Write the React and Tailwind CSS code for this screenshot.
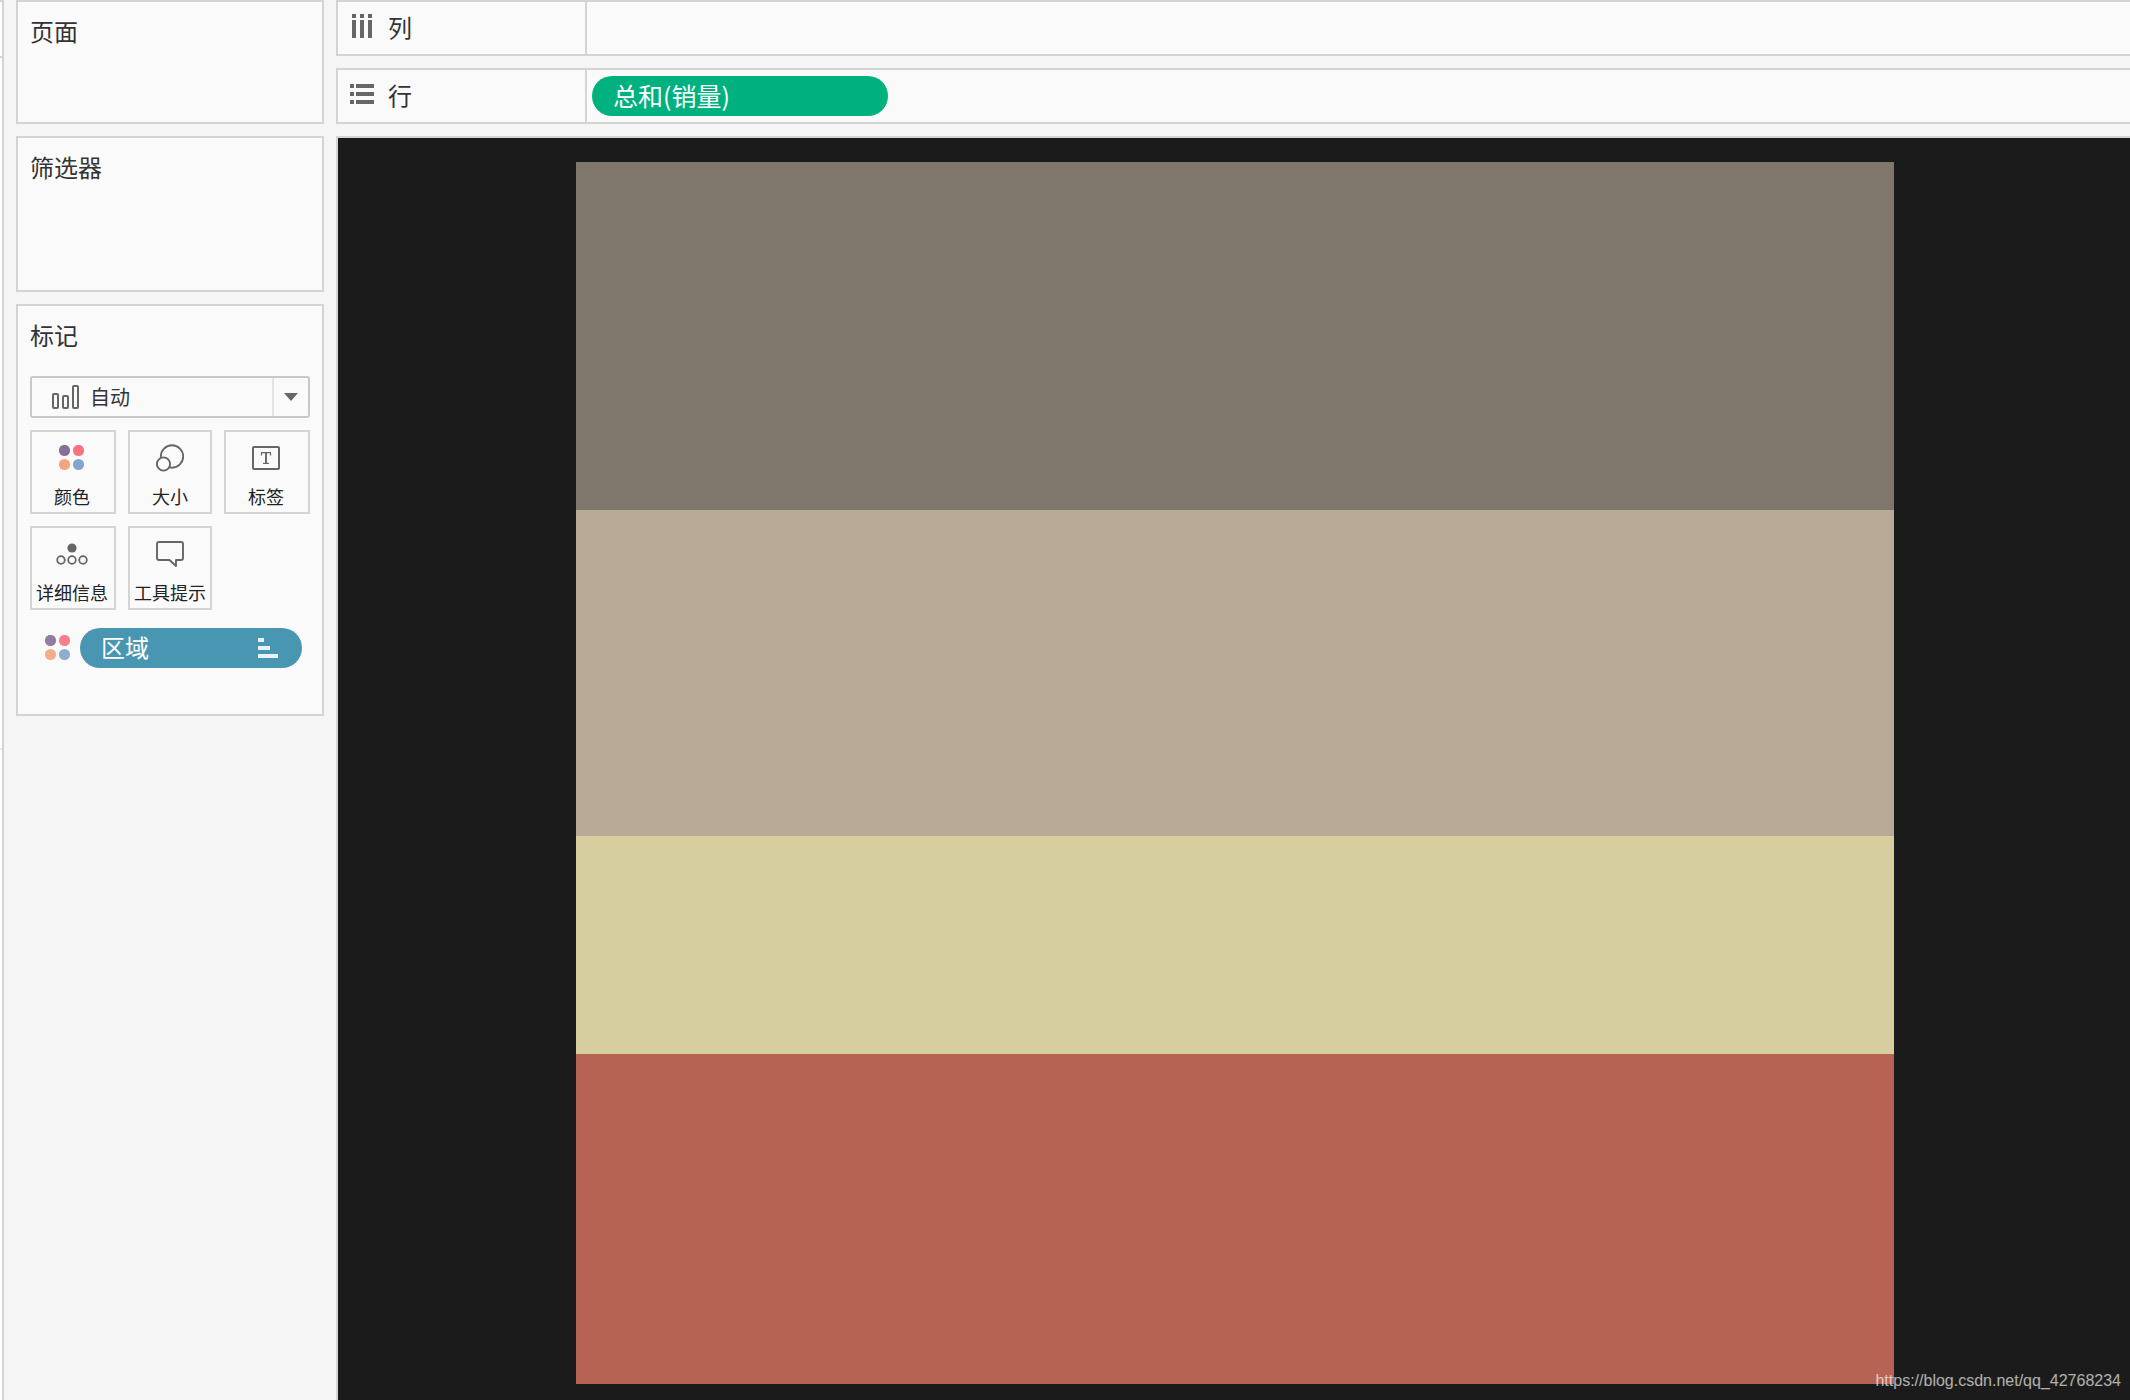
import React from "react";

const marks = [
  { label: "颜色", Icon: ColorIcon },
  { label: "大小", Icon: SizeIcon },
  { label: "标签", Icon: LabelIcon },
  { label: "详细信息", Icon: DetailIcon },
  { label: "工具提示", Icon: TooltipIcon },
];

const segments = [
  { weight: 348, color: "bg-[#7f766c]" },
  { weight: 326, color: "bg-[#b8aa96]" },
  { weight: 218, color: "bg-[#d6ce9e]" },
  { weight: 330, color: "bg-[#b66353]" },
];

function ColorIcon() {
  return (
    <svg width="26" height="26" viewBox="0 0 26 26" aria-hidden="true">
      <circle cx="5.5" cy="5.5" r="5.6" fill="#876f9a" />
      <circle cx="19.5" cy="5.5" r="5.6" fill="#f8727f" />
      <circle cx="5.5" cy="19.5" r="5.6" fill="#f3a67c" />
      <circle cx="19.5" cy="19.5" r="5.6" fill="#82a5cc" />
    </svg>
  );
}

function SizeIcon() {
  return (
    <svg width="28" height="28" viewBox="0 0 28 28" fill="#fafafa" stroke="#666" strokeWidth="1.9" aria-hidden="true">
      <circle cx="16" cy="12.5" r="11.2" />
      <circle cx="7.5" cy="20" r="6.6" />
    </svg>
  );
}

function LabelIcon() {
  return (
    <svg width="28" height="24" viewBox="0 0 28 24" fill="none" stroke="#666" aria-hidden="true">
      <rect x="1" y="1" width="26" height="22" rx="1" strokeWidth="2" />
      <path d="M9.5 9.5V6.6H18.5V9.5" strokeWidth="1.2" />
      <path d="M14 6.6V17.4" strokeWidth="1.9" />
      <path d="M11 17.4H17" strokeWidth="1.2" />
    </svg>
  );
}

function DetailIcon() {
  return (
    <svg width="32" height="22" viewBox="0 0 32 22" fill="none" stroke="#666" strokeWidth="1.8" aria-hidden="true">
      <circle cx="16" cy="5" r="4.6" fill="#666" stroke="none" />
      <circle cx="5" cy="17" r="3.8" />
      <circle cx="16" cy="17" r="3.8" />
      <circle cx="27" cy="17" r="3.8" />
    </svg>
  );
}

function TooltipIcon() {
  return (
    <svg width="28" height="26" viewBox="0 0 28 26" fill="none" stroke="#666" strokeWidth="1.9" strokeLinejoin="round" aria-hidden="true">
      <path d="M3 1H25Q27 1 27 3V17Q27 19 25 19H20V25L13.5 19H3Q1 19 1 17V3Q1 1 3 1Z" />
    </svg>
  );
}

function AutoIcon() {
  return (
    <svg width="28" height="24" viewBox="0 0 28 24" fill="none" stroke="#666" strokeWidth="2" aria-hidden="true">
      <rect x="1" y="9" width="5" height="14" rx="1" />
      <rect x="11" y="11" width="5" height="12" rx="1" />
      <rect x="21" y="1" width="5" height="22" rx="1" />
    </svg>
  );
}

function ColumnsIcon() {
  return (
    <svg width="24" height="24" viewBox="0 0 24 24" fill="#666" aria-hidden="true">
      <path d="M2 0h4v4h-4zM10 0h4v4h-4zM18 0h4v4h-4zM2 6h4v18h-4zM10 6h4v18h-4zM18 6h4v18h-4z" />
    </svg>
  );
}

function RowsIcon() {
  return (
    <svg width="24" height="24" viewBox="0 0 24 24" fill="#666" aria-hidden="true">
      <path d="M0 2h4v4h-4zM6 2h18v4h-18zM0 10h4v4h-4zM6 10h18v4h-18zM0 18h4v4h-4zM6 18h18v4h-18z" />
    </svg>
  );
}

function SortIcon() {
  return (
    <svg width="20" height="20" viewBox="0 0 20 20" fill="#e9f3f7" aria-hidden="true">
      <path d="M0 0h6v4h-6zM0 8h12v4h-12zM0 16h20v4h-20z" />
    </svg>
  );
}

function Card({ title, className, children }) {
  return (
    <section className={"border-2 border-[#d4d4d4] bg-[#fafafa] px-3 pt-3 " + className}>
      <h2 className="text-2xl leading-[34px]">{title}</h2>
      {children}
    </section>
  );
}

function Shelf({ title, Icon, children }) {
  return (
    <section className="flex h-14 border-2 border-r-0 border-[#d4d4d4] bg-[#fafafa]">
      <div className="flex w-[249px] shrink-0 items-start gap-[14px] border-r-2 border-[#d4d4d4] pt-2 pl-3">
        <span className="pt-1">
          <Icon />
        </span>
        <h2 className="text-2xl leading-[34px]">{title}</h2>
      </div>
      <div className="flex min-w-0 flex-1 items-center pl-[5px]">{children}</div>
    </section>
  );
}

export default function App() {
  return (
    <div className="flex min-h-screen bg-[#f5f5f5] font-['Noto_Sans_CJK_SC',sans-serif] text-[#333]">
      <div className="flex w-1 shrink-0 flex-col border-t-2 border-r-2 border-[#d4d4d4] bg-white">
        <div className="h-14 border-b-2 border-[#d4d4d4]" />
        <div className="h-[692px] border-b-2 border-[#e6e6e6]" />
      </div>

      <aside className="ml-3 flex w-[308px] shrink-0 flex-col gap-3">
        <Card title="页面" className="min-h-[124px]" />
        <Card title="筛选器" className="min-h-[156px]" />
        <Card title="标记" className="pb-[46px]">
          <div className="relative mt-6 h-[42px]">
            <select
              aria-label="标记类型"
              className="h-full w-full appearance-none rounded-[3px] border-2 border-[#c8c8c8] bg-[#fafafa] pl-[58px] text-xl leading-6"
            >
              <option>自动</option>
            </select>
            <div className="pointer-events-none absolute inset-0 flex items-center py-[2px] pl-[22px]">
              <AutoIcon />
              <span className="ml-auto flex h-full w-[38px] items-center justify-center border-l-2 border-[#e4e4e4] pr-[2px]">
                <svg width="14" height="8" viewBox="0 0 14 8" fill="#666" aria-hidden="true">
                  <path d="M0 0H14L7 8Z" />
                </svg>
              </span>
            </div>
          </div>

          <div className="mt-3 grid grid-cols-[86fr_84fr_86fr] gap-3">
            {marks.map(({ label, Icon }) => (
              <button
                key={label}
                type="button"
                className="flex h-[84px] flex-col items-center border-2 border-[#d4d4d4] bg-[#fafafa] pt-[11px] pr-0.5 text-[#222] nth-[3n+2]:pr-0"
              >
                <span className="flex h-[30px] items-center">
                  <Icon />
                </span>
                <span className="mt-[11px] text-lg leading-6 whitespace-nowrap">{label}</span>
              </button>
            ))}
          </div>

          <div className="mt-[18px] flex items-center pr-2 pl-[15px]">
            <span className="opacity-90">
              <ColorIcon />
            </span>
            <button
              type="button"
              className="ml-[9px] flex h-10 flex-1 items-center justify-between rounded-full bg-[#4996b2] pr-6 pl-[21px] text-2xl leading-9 text-white"
            >
              <span className="pb-0.5">区域</span>
              <SortIcon />
            </button>
          </div>
        </Card>
      </aside>

      <main className="ml-3 flex min-w-0 flex-1 flex-col gap-3">
        <Shelf title="列" Icon={ColumnsIcon} />
        <Shelf title="行" Icon={RowsIcon}>
          <button
            type="button"
            className="flex h-10 w-[296px] items-center rounded-full bg-[#00b180] pb-0.5 pl-[21px] text-[25px] leading-9 text-white"
          >
            总和(销量)
          </button>
        </Shelf>

        <section
          aria-label="图表"
          className="relative flex flex-1 border-t-2 border-l-2 border-[#d4d4d4] bg-[#1b1b1b] pt-6 pr-[236px] pb-4 pl-[238px]"
        >
          <div className="flex flex-1 flex-col">
            {segments.map(({ weight, color }) => (
              <div key={color} className={"basis-0 " + color} style={{ flexGrow: weight }} />
            ))}
          </div>
          <a
            href="https://blog.csdn.net/qq_42768234"
            className="absolute right-[9px] bottom-[7px] font-['Liberation_Sans',sans-serif] text-base leading-6 text-white/65"
          >
            https://blog.csdn.net/qq_42768234
          </a>
        </section>
      </main>
    </div>
  );
}
